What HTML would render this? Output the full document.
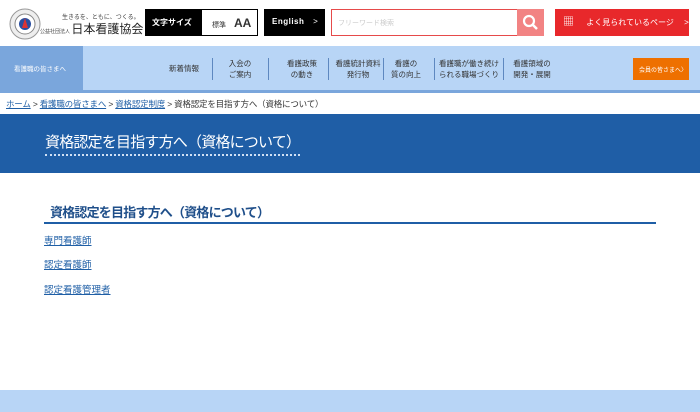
<!DOCTYPE html><html><head><meta charset="utf-8"><style>
*{margin:0;padding:0;box-sizing:border-box}
body{width:700px;height:412px;overflow:hidden;background:#fff;font-family:"Liberation Sans","Noto Sans CJK JP",sans-serif;position:relative;color:#333}
.a{position:absolute}
.nav{top:46px;left:0;width:700px;height:47px;background:#b8d5f6;border-bottom:3px solid #7aa6dc}
.ni{position:absolute;top:12px;font-size:7.5px;line-height:11px;text-align:center;color:#333;transform:translateX(-50%);white-space:nowrap}
.sep{position:absolute;top:12px;width:1px;height:22px;background:#5e88c0}
.lk{position:absolute;left:44px;font-size:9.5px;color:#1f5fa6;text-decoration:underline}
</style></head><body>
<svg class="a" style="left:9px;top:8px" width="32" height="32" viewBox="0 0 32 32"><circle cx="16" cy="16" r="15" fill="#eee" stroke="#999"/><circle cx="16" cy="16" r="10" fill="#fff" stroke="#888"/><circle cx="16" cy="16" r="6" fill="#2a4fa0"/><path d="M16 10 L19 20 L13 20Z" fill="#d33"/></svg>
<div class="a" style="left:62px;top:12px;font-size:6px;color:#444">生きるを、ともに、つくる。</div>
<div class="a" style="left:40px;top:23px;font-size:5px;color:#444;line-height:13px">公益社団法人 <span style="font-size:12px;color:#222">日本看護協会</span></div>
<div class="a" style="left:145px;top:9px;width:113px;height:27px;background:#000"></div>
<div class="a" style="left:152px;top:17px;font-size:8px;color:#fff;font-weight:bold">文字サイズ</div>
<div class="a" style="left:202px;top:10px;width:55px;height:25px;background:#fff;font-size:7px;padding:6px 0 0 10px">標準 <b style="font-size:12px;margin-left:6px">AA</b></div>
<div class="a" style="left:264px;top:9px;width:61px;height:27px;background:#000;color:#fff;font-size:8px;font-weight:bold;padding:8px 0 0 8px;letter-spacing:.5px">English <span style="margin-left:6px;font-weight:normal">&gt;</span></div>
<div class="a" style="left:331px;top:9px;width:187px;height:27px;border:1px solid #e64a4a;font-size:7px;color:#ccc;padding:8px 0 0 6px">フリーワード検索</div>
<div class="a" style="left:517px;top:9px;width:27px;height:27px;background:#f28383"><svg width="27" height="27"><circle cx="12" cy="12" r="5" fill="none" stroke="#fff" stroke-width="2.2"/><path d="M16 16 L20 20" stroke="#fff" stroke-width="2.5"/></svg></div>
<div class="a" style="left:555px;top:9px;width:134px;height:27px;background:#e8282b;color:#fff;font-size:8px;padding:8px 0 0 8px"><span style="font-size:11px;line-height:8px">▦</span> <span style="margin-left:10px">よく見られているページ</span> <span style="margin-left:8px">&gt;</span></div>
<div class="a nav">
<div class="a" style="left:0;top:0;width:83px;height:44px;background:#7aa6dc;color:#fff;font-size:6.5px;padding:17px 0 0 14px">看護職の皆さまへ</div>
<div class="ni" style="left:184px;top:17px">新着情報</div><div class="sep" style="left:212px"></div>
<div class="ni" style="left:240px">入会の<br>ご案内</div><div class="sep" style="left:268px"></div>
<div class="ni" style="left:302px">看護政策<br>の動き</div><div class="sep" style="left:328px"></div>
<div class="ni" style="left:358px">看護統計資料<br>発行物</div><div class="sep" style="left:383px"></div>
<div class="ni" style="left:406px">看護の<br>質の向上</div><div class="sep" style="left:434px"></div>
<div class="ni" style="left:469px">看護職が働き続け<br>られる職場づくり</div><div class="sep" style="left:503px"></div>
<div class="ni" style="left:532px">看護領域の<br>開発・展開</div>
<div class="a" style="left:633px;top:12px;width:56px;height:22px;background:#ee7000;color:#fff;font-size:6px;padding:7px 0 0 6px">会員の皆さまへ〉</div>
</div>
<div class="a" style="left:6px;top:98px;font-size:8.5px;color:#333;white-space:nowrap;letter-spacing:-.2px"><u style="color:#1f5fa6">ホーム</u> &gt; <u style="color:#1f5fa6">看護職の皆さまへ</u> &gt; <u style="color:#1f5fa6">資格認定制度</u> &gt; 資格認定を目指す方へ（資格について）</div>
<div class="a" style="left:0;top:114px;width:700px;height:59px;background:#1f5ea6"></div>
<div class="a" style="left:45px;top:131px;font-size:15px;color:#fff;letter-spacing:-.8px;border-bottom:2px dotted #cfe0f5;padding-bottom:2px;white-space:nowrap">資格認定を目指す方へ（資格について）</div>
<div class="a" style="left:50px;top:202px;font-size:13px;font-weight:bold;color:#1f4f8a;letter-spacing:-.8px;white-space:nowrap">資格認定を目指す方へ（資格について）</div>
<div class="a" style="left:44px;top:222px;width:612px;height:2px;background:#1f5ea6"></div>
<div class="lk" style="top:233px">専門看護師</div>
<div class="lk" style="top:257px">認定看護師</div>
<div class="lk" style="top:282px">認定看護管理者</div>
<div class="a" style="left:0;top:390px;width:700px;height:22px;background:#b8d5f6"></div>
</body></html>
